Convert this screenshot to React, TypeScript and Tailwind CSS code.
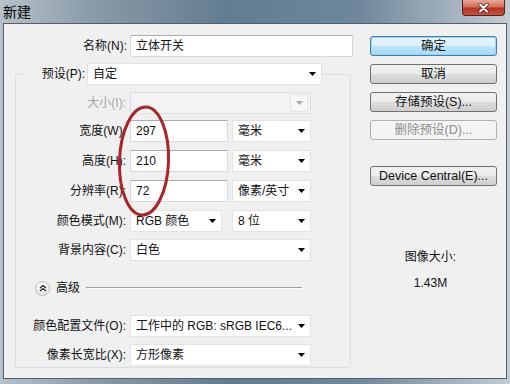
import type { ReactNode } from 'react';

const font = { fontFamily: '"Liberation Sans", "Noto Sans CJK SC", sans-serif' };

function Arrow({ disabled }: { disabled?: boolean }) {
  return (
    <svg width="7" height="4" viewBox="0 0 7 4" className="shrink-0">
      <path d="M0 0 L7 0 L3.5 4 Z" fill={disabled ? '#a8a8a8' : '#000'} />
    </svg>
  );
}

function Select({ value, w, disabled }: { value?: string; w: string; disabled?: boolean }) {
  return (
    <div
      className={`${w} h-[22px] flex items-center justify-between pl-[5px] pr-[5px] border ${
        disabled ? 'bg-[#f4f4f4] border-[#dedede]' : 'bg-white border-[#e3e3e3]'
      }`}
    >
      <span className="whitespace-nowrap">{value}</span>
      {disabled ? (
        <div className="h-[18px] w-[18px] -mr-[3px] border border-[#e3e3e3] bg-[#f7f7f7] flex items-center justify-center">
          <Arrow disabled />
        </div>
      ) : (
        <Arrow />
      )}
    </div>
  );
}

function Input({ value, w }: { value: string; w: string }) {
  return (
    <div className={`${w} h-[22px] flex items-center pl-[5px] bg-white border border-[#d5d9dd] border-t-[#a8aeb4]`}>
      {value}
    </div>
  );
}

function Row({ label, children, mt, disabled }: { label: string; children: ReactNode; mt: string; disabled?: boolean }) {
  return (
    <div className={`flex items-center ${mt}`}>
      <div className={`w-[111px] text-right pr-[1px] ${disabled ? 'text-[#a5a5a5]' : ''}`}>{label}</div>
      <div className="ml-[3px] flex gap-[4px]">{children}</div>
    </div>
  );
}

function Button({ label, primary, disabled, mt }: { label: string; primary?: boolean; disabled?: boolean; mt: string }) {
  const look = primary
    ? 'border-[#3c7fb1] bg-[linear-gradient(#eaf6fd,#d9f0fc_50%,#bee6fd_51%,#a7d9f5)] shadow-[inset_0_0_0_1px_#9ed4f0]'
    : disabled
      ? 'border-[#adb2b5] bg-[#f4f4f4] text-[#8d8d8d]'
      : 'border-[#707070] bg-[linear-gradient(#f2f2f2,#ebebeb_50%,#dddddd_51%,#cfcfcf)]';
  return (
    <div className={`${mt} h-[20px] w-[127px] rounded-[3px] border flex items-center justify-center text-[12.5px] ${look}`}>
      {label}
    </div>
  );
}

export default function App() {
  return (
    <div
      className="relative w-[510px] h-[384px] overflow-hidden text-[12px] text-[#111] bg-[linear-gradient(to_right,#b7c2ca,#8a9aa8_18%,#637c90_45%,#6f879a_70%,#c3ccd3)]"
      style={font}
    >
      {/* title bar */}
      <div className="h-[23px] pl-[3px] pt-[2px] text-[14px] text-black">新建</div>
      <div className="absolute right-[5px] top-0 w-[43px] h-[16px] rounded-b-[4px] border border-t-0 border-[#5a1f17] bg-[linear-gradient(#e9a999,#d0705e_45%,#b73222_55%,#c8543c)] flex items-center justify-center">
        <svg width="11" height="10" viewBox="0 0 11 10">
          <path d="M2 1.5 L9 8.5 M9 1.5 L2 8.5" stroke="#4a1a12" strokeWidth="3.4" strokeLinecap="round" />
          <path d="M2 1.5 L9 8.5 M9 1.5 L2 8.5" stroke="#fff" strokeWidth="2" strokeLinecap="round" />
        </svg>
      </div>

      {/* client area */}
      <div className="ml-[3px] w-[504px] h-[356px] border border-[#4f5f6d] bg-[#f0f0f0] flex">
        <div className="w-[366px] pt-[11px]">
          <div className="flex items-center">
            <div className="w-[123px] text-right">名称(N):</div>
            <div className="ml-[3px]">
              <Input value="立体开关" w="w-[223px]" />
            </div>
          </div>

          <fieldset className="mt-[6px] ml-[11px] w-[336px] h-[305px] border border-[#d5dfe5] rounded-[2px] p-0">
            <legend className="ml-[7px] p-0">
              <div className="flex items-center">
                <div className="w-[62px] text-right">预设(P):</div>
                <div className="ml-[2px]">
                  <Select value="自定" w="w-[235px]" />
                </div>
              </div>
            </legend>

            <Row label="大小(I):" mt="mt-[7px]" disabled>
              <Select w="w-[181px]" disabled />
            </Row>
            <Row label="宽度(W):" mt="mt-[6px]">
              <Input value="297" w="w-[98px]" />
              <Select value="毫米" w="w-[79px]" />
            </Row>
            <Row label="高度(H):" mt="mt-[8px]">
              <Input value="210" w="w-[98px]" />
              <Select value="毫米" w="w-[79px]" />
            </Row>
            <Row label="分辨率(R):" mt="mt-[8px]">
              <Input value="72" w="w-[98px]" />
              <Select value="像素/英寸" w="w-[79px]" />
            </Row>
            <Row label="颜色模式(M):" mt="mt-[8px]">
              <Select value="RGB 颜色" w="w-[92px]" />
              <div className="ml-[6px]">
                <Select value="8 位" w="w-[79px]" />
              </div>
            </Row>
            <Row label="背景内容(C):" mt="mt-[7px]">
              <Select value="白色" w="w-[181px]" />
            </Row>

            <div className="mt-[19px] ml-[19px] h-[16px] flex items-center">
              <div className="w-[15px] h-[15px] rounded-full border border-[#b4b9bd] bg-[linear-gradient(#ffffff,#e4e6e8)] flex items-center justify-center">
                <svg width="8" height="8" viewBox="0 0 8 8">
                  <path d="M1 4 L4 1.5 L7 4 M1 7 L4 4.5 L7 7" stroke="#222" strokeWidth="1.3" fill="none" />
                </svg>
              </div>
              <span className="ml-[6px]">高级</span>
              <div className="ml-[6px] w-[216px] h-[2px] border-t border-[#a0a0a0] border-b border-b-white" />
            </div>

            <Row label="颜色配置文件(O):" mt="mt-[19px]">
              <Select value="工作中的 RGB: sRGB IEC6..." w="w-[181px]" />
            </Row>
            <Row label="像素长宽比(X):" mt="mt-[7px]">
              <Select value="方形像素" w="w-[181px]" />
            </Row>
          </fieldset>
        </div>

        <div className="w-[127px] pt-[12px] flex flex-col">
          <Button label="确定" primary mt="mt-0" />
          <Button label="取消" mt="mt-[8px]" />
          <Button label="存储预设(S)..." mt="mt-[8px]" />
          <Button label="删除预设(D)..." disabled mt="mt-[8px]" />
          <Button label="Device Central(E)..." mt="mt-[26px]" />
          <div className="mt-[63px] text-center pr-[6px] leading-[16px]">图像大小:</div>
          <div className="mt-[10px] text-center pr-[6px] leading-[16px]">1.43M</div>
        </div>
      </div>

      {/* red annotation ellipse */}
      <svg className="absolute left-[113px] top-[103px]" width="60" height="118" viewBox="0 0 60 118">
        <ellipse cx="31" cy="58" rx="24.5" ry="54" transform="rotate(2 31 58)" fill="none" stroke="#a8262b" strokeWidth="3" />
      </svg>
    </div>
  );
}
